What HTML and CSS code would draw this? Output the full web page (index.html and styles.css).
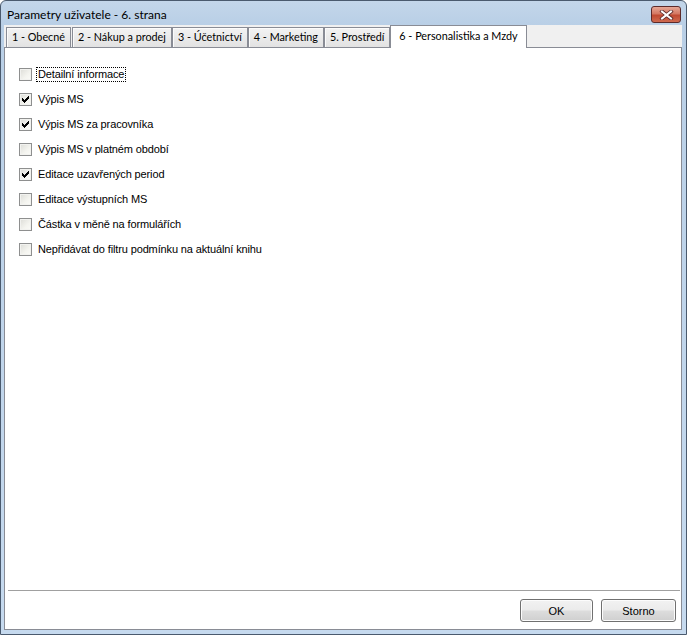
FILE: index.html
```html
<!DOCTYPE html>
<html lang="cs">
<head>
<meta charset="utf-8">
<link rel="stylesheet" href="styles.css">
</head>
<body>
<div class="window">
  <div class="titlebar">
    <span class="title">Parametry uživatele - 6. strana</span>
    <div class="close">
      <svg width="17" height="10" viewBox="0 0 17 10"><path d="M4 1.5 L13 8.5 M13 1.5 L4 8.5" stroke="#5a2a2a" stroke-width="3.6" stroke-linecap="square"/><path d="M4 1.5 L13 8.5 M13 1.5 L4 8.5" stroke="#fff" stroke-width="2" stroke-linecap="square"/></svg>
    </div>
  </div>
  <div class="client">
    <div class="tabs">
      <div class="tab">1 - Obecné</div>
      <div class="tab">2 - Nákup a prodej</div>
      <div class="tab">3 - Účetnictví</div>
      <div class="tab">4 - Marketing</div>
      <div class="tab">5. Prostředí</div>
      <div class="tab active">6 - Personalistika a Mzdy</div>
    </div>
    <div class="panel">
      <div class="list">
        <div class="row"><span class="cb"></span><span class="lbl focus">Detailní informace</span></div>
        <div class="row"><span class="cb checked"></span><span class="lbl">Výpis MS</span></div>
        <div class="row"><span class="cb checked"></span><span class="lbl">Výpis MS za pracovníka</span></div>
        <div class="row"><span class="cb"></span><span class="lbl">Výpis MS v platném období</span></div>
        <div class="row"><span class="cb checked"></span><span class="lbl">Editace uzavřených period</span></div>
        <div class="row"><span class="cb"></span><span class="lbl">Editace výstupních MS</span></div>
        <div class="row"><span class="cb"></span><span class="lbl">Částka v měně na formulářích</span></div>
        <div class="row"><span class="cb"></span><span class="lbl">Nepřidávat do filtru podmínku na aktuální knihu</span></div>
      </div>
      <div class="footer">
        <button class="btn">OK</button>
        <button class="btn">Storno</button>
      </div>
    </div>
  </div>
</div>
</body>
</html>
```

FILE: styles.css
```css
html, body { margin: 0; padding: 0; background: #fff; }
body { width: 687px; height: 635px; overflow: hidden; }

.window {
  box-sizing: border-box;
  width: 687px;
  height: 635px;
  border: 1px solid #4a5a6e;
  border-radius: 6px 6px 0 0;
  background: linear-gradient(to bottom, #c3d6ea 0px, #b9cfe6 24px, #c6daef 100%);
  display: flex;
  flex-direction: column;
  padding: 0 4px 4px 3px;
}

.titlebar {
  height: 24px;
  display: flex;
  align-items: center;
  justify-content: space-between;
  flex: none;
}
.title {
  font-family: Lato, "Noto Sans", sans-serif;
  font-size: 12px;
  color: #000;
  padding-left: 3px;
  padding-top: 2px;
}
.close {
  width: 30px;
  height: 17px;
  box-sizing: border-box;
  border: 1px solid #5c2a2a;
  border-radius: 3px;
  background: linear-gradient(to bottom, #e6a796 0%, #d47863 45%, #c04a32 55%, #cf6a4f 100%);
  display: flex;
  align-items: center;
  justify-content: center;
  margin-top: 3px;
  margin-right: 1px;
}

.client {
  flex: 1;
  display: flex;
  flex-direction: column;
  background: #fff;
}

.tabs {
  display: flex;
  align-items: flex-end;
  height: 22px;
  flex: none;
  background: #f0f0f0;
  padding-left: 2px;
}
.tab {
  box-sizing: border-box;
  height: 20px;
  border: 1px solid #898c95;
  border-bottom: none;
  background: linear-gradient(to bottom, #f3f3f3, #e2e2e2);
  box-shadow: inset 1px 1px 0 #fbfbfb;
  font-family: Lato, "Noto Sans", sans-serif;
  font-size: 10.8px;
  line-height: 18px;
  padding: 0 5px;
  margin-right: 1px;
  color: #000;
  white-space: nowrap;
}
.tab:nth-child(n+3) { margin-left: -1px; }
.tab.active {
  height: 23px;
  background: #fff;
  box-shadow: none;
  margin-bottom: -1px;
  margin-left: -1px;
  padding: 0 8px;
  line-height: 19px;
  position: relative;
  z-index: 1;
}

.panel {
  flex: 1;
  box-sizing: border-box;
  border: 1px solid #898c95;
  background: #fff;
  display: flex;
  flex-direction: column;
}

.list {
  flex: 1;
  padding: 20px 0 0 14px;
  display: flex;
  flex-direction: column;
  gap: 12px;
}
.row {
  display: flex;
  align-items: center;
  height: 13px;
  font-family: "Liberation Sans", Arial, sans-serif;
  font-size: 11px;
  letter-spacing: -0.13px;
  color: #000;
}
.cb {
  box-sizing: border-box;
  width: 13px;
  height: 13px;
  border: 1px solid #8e8f8f;
  background: linear-gradient(135deg, #dcdcd7 0%, #f4f4ef 60%, #fbfbf8 100%);
  box-shadow: inset 0 0 0 1px #f2f2ef;
  margin-right: 5px;
  flex: none;
  position: relative;
}
.cb.checked::before {
  content: "";
  position: absolute;
  left: 2px;
  top: 2px;
  width: 7px;
  height: 7px;
  background:
    linear-gradient(#000,#000) 0 2px / 1px 3px no-repeat,
    linear-gradient(#000,#000) 1px 3px / 1px 3px no-repeat,
    linear-gradient(#000,#000) 2px 4px / 1px 3px no-repeat,
    linear-gradient(#000,#000) 3px 3px / 1px 3px no-repeat,
    linear-gradient(#000,#000) 4px 2px / 1px 3px no-repeat,
    linear-gradient(#000,#000) 5px 1px / 1px 3px no-repeat,
    linear-gradient(#000,#000) 6px 0px / 1px 3px no-repeat;
}
.lbl {
  padding: 0 1px;
  line-height: 13px;
}
.lbl.focus {
  outline: 1px dotted #000;
  outline-offset: 0px;
}

.footer {
  flex: none;
  box-sizing: border-box;
  height: 39px;
  margin: 0 1px 0 3px;
  border-top: 1px solid #a0a0a0;
  display: flex;
  justify-content: flex-end;
  align-items: flex-start;
  padding-top: 8px;
  padding-right: 4px;
  gap: 8px;
}
.btn {
  width: 73px;
  height: 23px;
  border: 1px solid #707070;
  border-radius: 3px;
  background: linear-gradient(to bottom, #f2f2f2 0%, #ebebeb 48%, #dddddd 52%, #cfcfcf 100%);
  box-shadow: inset 0 0 0 1px #fcfcfc;
  font-family: "Liberation Sans", Arial, sans-serif;
  font-size: 11px;
  font-weight: normal;
  color: #000;
  padding: 0;
}
.btn + .btn { width: 75px; }
```
